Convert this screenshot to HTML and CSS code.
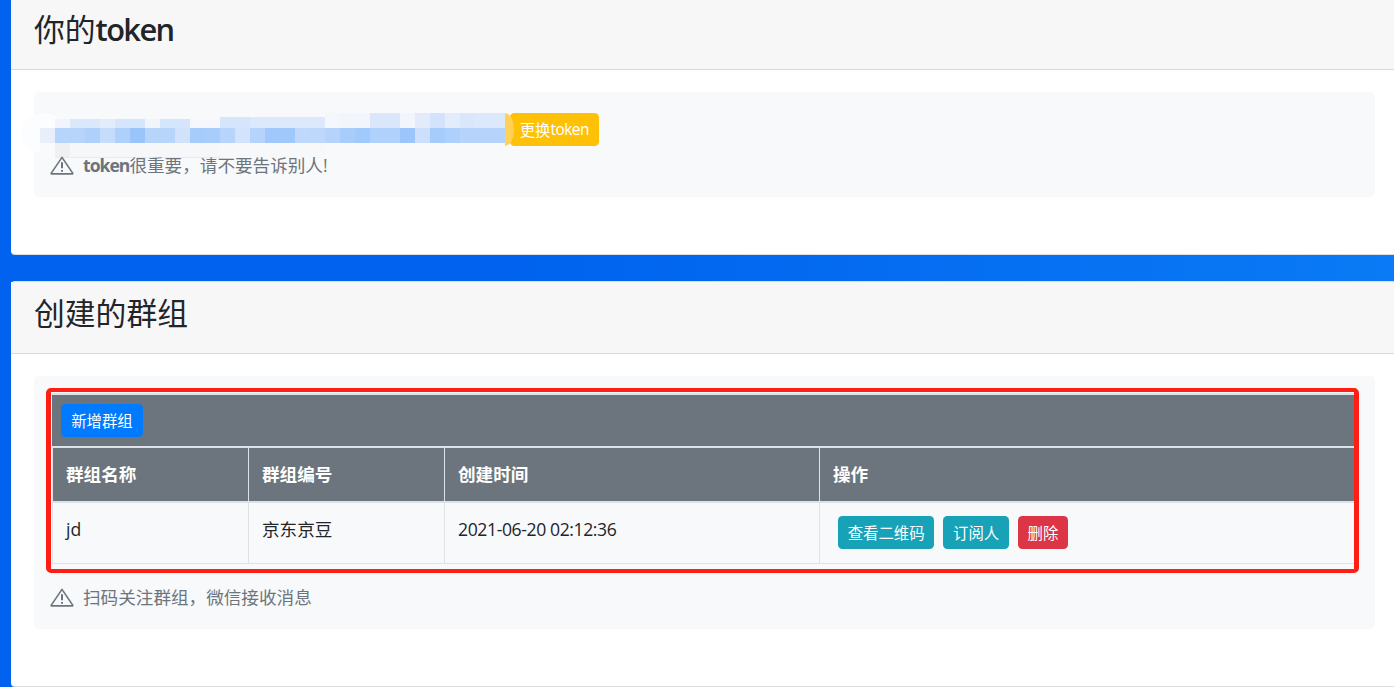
FILE: index.html
```html
<!DOCTYPE html>
<html lang="zh-CN">
<head>
  <meta charset="UTF-8">
  <meta name="viewport" content="width=device-width, initial-scale=1.0">
  <title>你的token</title>
  <link rel="stylesheet" href="styles.css">
</head>
<body>
  <div class="card card-token">
    <div class="card-header">
      <h3>你的<b>token</b></h3>
    </div>
    <div class="card-body">
      <div class="jumbotron jumbotron-token">
        <div class="token-line">
          <!-- token is masked in the screenshot -->
          <div class="token-text"></div>
          <div class="mosaic">
            <div class="mosaic-glow"></div>
            <div class="mosaic-edge"></div>
            <div class="strip strip-top"></div>
            <div class="strip strip-mid"></div>
            <div class="strip strip-low"></div>
          </div>
          <button class="btn btn-warning">更换<span class="latin">token</span></button>
        </div>
        <p class="note">
          <svg class="note-icon" viewBox="0 0 24 19" aria-hidden="true">
            <path d="M12 1.4 L1.3 17.1 Q1 17.9 1.9 17.9 H22.1 Q23 17.9 22.7 17.1 Z"/>
            <path class="mark" d="M12 6.2 V12.2 M12 14 V15.8"/>
          </svg>
          <span><b>token</b>很重要，请不要告诉别人!</span>
        </p>
      </div>
    </div>
  </div>

  <div class="card card-groups">
    <div class="card-header">
      <h3>创建的群组</h3>
    </div>
    <div class="card-body">
      <div class="jumbotron jumbotron-groups">
        <div class="table-wrap">
          <div class="toolbar">
            <button class="btn btn-primary">新增群组</button>
          </div>
          <table class="groups">
            <thead>
              <tr>
                <th class="col-name">群组名称</th>
                <th class="col-code">群组编号</th>
                <th class="col-time">创建时间</th>
                <th>操作</th>
              </tr>
            </thead>
            <tbody>
              <tr>
                <td>jd</td>
                <td>京东京豆</td>
                <td class="created">2021-06-20 02:12:36</td>
                <td class="actions">
                  <button class="btn btn-info">查看二维码</button>
                  <button class="btn btn-info">订阅人</button>
                  <button class="btn btn-danger">删除</button>
                </td>
              </tr>
            </tbody>
          </table>
          <div class="red-box"></div>
        </div>
        <p class="note">
          <svg class="note-icon" viewBox="0 0 24 19" aria-hidden="true">
            <path d="M12 1.4 L1.3 17.1 Q1 17.9 1.9 17.9 H22.1 Q23 17.9 22.7 17.1 Z"/>
            <path class="mark" d="M12 6.2 V12.2 M12 14 V15.8"/>
          </svg>
          <span>扫码关注群组，微信接收消息</span>
        </p>
      </div>
    </div>
  </div>
</body>
</html>
```

FILE: styles.css
```css
* {
  box-sizing: border-box;
  margin: 0;
  padding: 0;
}

html, body {
  height: 687px;
  overflow: hidden;
}

body {
  font-family: "Open Sans", "Noto Sans CJK SC", sans-serif;
  font-size: 17.6px;
  line-height: 1.5;
  color: #212529;
  background: linear-gradient(90deg, #0062ee 0%, #0062ee 35%, #0a7af5 100%);
  padding-left: 11px;
}

/* Cards */
.card {
  background: #fff;
  border: 1px solid rgba(0,0,0,0.125);
  border-left: none;
  border-radius: 4px;
  margin-right: -5px;
}

.card-token {
  margin-top: -3px;
  height: 258px;
}

.card-groups {
  margin-top: 26px;
  height: 406px;
}

.card-header {
  height: 72px;
  padding: 0 23px 8px;
  display: flex;
  align-items: center;
  background: #f7f7f7;
  border-bottom: 1px solid #d9d9d9;
}

h3 {
  font-size: 30.8px;
  font-weight: 400;
  line-height: 1.2;
  color: #212529;
}

h3 b {
  font-weight: 600;
  letter-spacing: -1.6px;
}

.card-body {
  padding: 22px 23px;
}

/* Jumbotron */
.jumbotron {
  background: #f8f9fa;
  border-radius: 5px;
}

.jumbotron-token {
  height: 105px;
  padding: 21px 16px 0;
}

.jumbotron-groups {
  height: 253px;
  padding: 17px 20px 0 18px;
}

/* Token row */
.token-line {
  display: flex;
  position: relative;
  height: 33px;
}

.token-text {
  width: 460px;
}

.mosaic {
  position: absolute;
  left: -30px;
  top: 0;
  width: 490px;
  height: 46px;
}

.mosaic-glow {
  position: absolute;
  left: 1px;
  top: 0;
  width: 44px;
  height: 40px;
  border-radius: 50%;
  background: #fcfdfe;
}

.mosaic-edge {
  position: absolute;
  right: -4px;
  top: 0;
  width: 9px;
  height: 33px;
  border-radius: 0 100% 100% 0 / 0 50% 50% 0;
  background: #ffd257;
  z-index: 4;
}

.strip {
  position: absolute;
  left: 0;
  width: 485px;
  height: 15px;
}

.strip-top {
  top: 0;
  background:
    linear-gradient(90deg,
      transparent 0 305px,
      #f4f7fc 305px 320px,
      #f2f5fc 320px 350px,
      #dae7fb 350px 380px,
      #f2f5fc 380px 395px,
      #e3ebfb 395px 410px,
      #d3e3fb 410px 425px,
      #e3ecfb 425px 440px,
      #dae7fb 440px 455px,
      #dce8fb 455px 485px) 0 0 / 100% 15px no-repeat,
    linear-gradient(90deg,
      transparent 0 200px,
      #d5e5fb 200px 230px,
      #dce8fb 230px 305px,
      transparent 305px) 0 4px / 100% 11px no-repeat,
    linear-gradient(90deg,
      transparent 0 35px,
      #f0f4fc 35px 50px,
      #dbe7fa 50px 80px,
      #e3ecfa 80px 95px,
      #d5e5fb 95px 125px,
      #f0f4fb 125px 140px,
      #d5e5fb 140px 170px,
      #f5f7fc 170px 200px,
      transparent 200px) 0 6px / 100% 9px no-repeat;
}

.strip-mid {
  top: 15px;
  background: linear-gradient(90deg,
    transparent 0 20px,
    #e8effb 20px 35px,
    #b7d5fb 35px 65px,
    #aed0fb 65px 80px,
    #c6dcfb 80px 95px,
    #aed0fb 95px 110px,
    #99c5fb 110px 125px,
    #b7d5fb 125px 155px,
    #d1e2fa 155px 170px,
    #a6ccfb 170px 185px,
    #a9cdfb 185px 200px,
    #b7d5fb 200px 215px,
    #d3e3fb 215px 230px,
    #b5d3fb 230px 245px,
    #a0c8fb 245px 275px,
    #c0d9fb 275px 290px,
    #bdd8fb 290px 305px,
    #b5d3fb 305px 320px,
    #a9cdfb 320px 335px,
    #a2c9fb 335px 350px,
    #b0d1fb 350px 380px,
    #9cc6fb 380px 395px,
    #cddffb 395px 410px,
    #a6ccfb 410px 425px,
    #aed0fb 425px 440px,
    #b5d3fb 440px 485px);
}

.strip-low {
  top: 30px;
  background:
    linear-gradient(90deg, transparent 0 35px, #e9eaec 35px 200px, transparent 200px) 0 14px / 100% 1px no-repeat,
    linear-gradient(90deg,
      transparent 0 20px,
      #f9fafb 20px 35px,
      #eff0f2 35px 50px,
      #f6f7f9 50px 200px,
      #f7f8fa 200px 305px,
      transparent 305px);
}

/* Notes */
.note {
  display: flex;
  align-items: center;
  gap: 9px;
  color: #6c757d;
  height: 26px;
  margin-top: 6px;
  position: relative;
}

.note b {
  letter-spacing: -1px;
}

.note-icon {
  width: 24px;
  height: 19px;
  flex-shrink: 0;
}

.note-icon path {
  fill: none;
  stroke: #6c757d;
  stroke-width: 1.6;
  stroke-linejoin: round;
}

.note-icon .mark {
  stroke-width: 2;
}

.jumbotron-groups .note {
  margin-top: 20px;
  margin-left: -2px;
}

/* Buttons */
.btn {
  display: inline-flex;
  align-items: center;
  height: 33px;
  padding: 0 9.7px;
  border: none;
  border-radius: 4.4px;
  color: #fff;
  font-family: inherit;
  font-size: 15.4px;
  white-space: nowrap;
  position: relative;
  z-index: 3;
}

.latin {
  letter-spacing: -0.5px;
}

.btn-primary {
  background: #007bff;
  padding: 0 10.2px;
}

.btn-warning {
  background: #ffc107;
}

.btn-info {
  background: #17a2b8;
}

.btn-danger {
  background: #dc3545;
}

/* Table */
.table-wrap {
  position: relative;
}

.toolbar {
  height: 55px;
  padding: 9px;
  background: #6c757d;
  border-top: 2px solid #dee2e6;
  border-bottom: 2px solid #dee2e6;
}

.groups {
  width: 100%;
  border-collapse: collapse;
  table-layout: fixed;
  background: #f8f9fa;
}

.groups th,
.groups td {
  padding: 13px;
  text-align: left;
  vertical-align: top;
  border: 1px solid #dee2e6;
  font-weight: 400;
}

.groups th {
  height: 54px;
  background: #6c757d;
  color: #fff;
  font-weight: 700;
  border-top: none;
  border-bottom: 2px solid #dee2e6;
}

.col-name,
.col-code {
  width: 196px;
}

.col-time {
  width: 375px;
}

.groups .created {
  letter-spacing: -0.4px;
}

.groups .actions {
  padding-left: 18px;
  padding-bottom: 14px;
  font-size: 0;
}

.actions .btn {
  margin-right: 9px;
}

/* annotation drawn over the table */
.red-box {
  position: absolute;
  left: -6px;
  right: -4px;
  top: -5px;
  bottom: -9px;
  border: 4px solid #fe1e14;
  border-width: 4px 5px 4px 5px;
  border-radius: 5px;
  z-index: 5;
  pointer-events: none;
}
```
